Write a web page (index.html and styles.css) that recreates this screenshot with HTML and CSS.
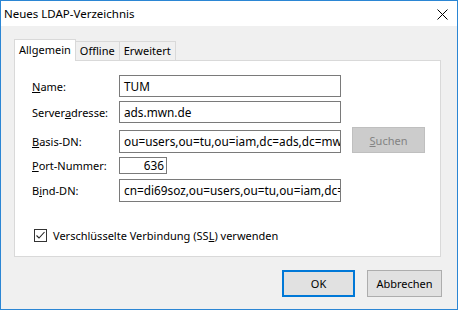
FILE: index.html
```html
<!DOCTYPE html>
<html lang="de">
<head>
  <meta charset="UTF-8" />
  <title>Neues LDAP-Verzeichnis</title>
  <link rel="stylesheet" href="styles.css">
</head>
<body>
  <div class="window">
    <div class="titlebar">
      <span class="title">Neues LDAP-Verzeichnis</span>
      <svg class="close" width="11" height="11" viewBox="0 0 11 11">
        <path d="M0.5 0.5 L10.5 10.5 M10.5 0.5 L0.5 10.5" stroke="#000" stroke-width="1" fill="none" />
      </svg>
    </div>

    <div class="content">
      <div class="tabs">
        <div class="tab active">Allgemein</div>
        <div class="tab">Offline</div>
        <div class="tab">Erweitert</div>
      </div>

      <div class="panel">
        <div class="row">
          <span class="label"><u>N</u>ame:</span>
          <div class="field">TUM</div>
        </div>
        <div class="row">
          <span class="label">Server<u>a</u>dresse:</span>
          <div class="field">ads.mwn.de</div>
        </div>
        <div class="row basis">
          <span class="label"><u>B</u>asis-DN:</span>
          <div class="field tall">ou=users,ou=tu,ou=iam,dc=ads,dc=mwn,dc=de</div>
          <button class="btn disabled"><u>S</u>uchen</button>
        </div>
        <div class="row port">
          <span class="label"><u>P</u>ort-Nummer:</span>
          <div class="field small">636</div>
        </div>
        <div class="row bind">
          <span class="label">B<u>i</u>nd-DN:</span>
          <div class="field tall">cn=di69soz,ou=users,ou=tu,ou=iam,dc=ads,dc=mwn,dc=de</div>
        </div>

        <div class="check">
          <span class="box">
            <svg width="11" height="11" viewBox="0 0 11 11">
              <path d="M1.5 5.5 L4 8 L9.5 2" stroke="#222" stroke-width="1.1" fill="none" />
            </svg>
          </span>
          <span>Verschlüsselte Verbindung (SS<u>L</u>) verwenden</span>
        </div>
      </div>

      <div class="buttons">
        <button class="btn default">OK</button>
        <button class="btn">Abbrechen</button>
      </div>
    </div>
  </div>
</body>
</html>
```

FILE: styles.css
```css
* {
  box-sizing: border-box;
}

body {
  margin: 0;
  font-family: 'Segoe UI', 'Noto Sans', sans-serif;
  font-size: 11px;
  color: #000;
  background: #f0f0f0;
}

.window {
  width: 458px;
  height: 310px;
  border: 1px solid #2b86d4;
  background: #f0f0f0;
  display: flex;
  flex-direction: column;
}

.titlebar {
  height: 25px;
  background: #fff;
  display: flex;
  align-items: center;
  justify-content: space-between;
  padding: 0 9px 0 3px;
  font-size: 11.5px;
}

.close { display: block; margin-top: 1px; }

.content {
  padding: 13px 16px 0 13px;
}

.tabs {
  display: flex;
  align-items: flex-end;
  height: 21px;
}

.tab {
  height: 19px;
  line-height: 17px;
  padding: 0 4px;
  border: 1px solid #d9d9d9;
  border-bottom: none;
  background: #f0f0f0;
  margin-left: -1px;
}

.tab.active {
  margin-left: 0;
  height: 22px;
  line-height: 19px;
  margin-bottom: -1px;
  background: #fff;
  position: relative;
  z-index: 1;
}

.panel {
  width: 427px;
  height: 197px;
  border: 1px solid #d9d9d9;
  background: #fff;
  padding: 14px 0 0 17px;
}

.row {
  display: flex;
  align-items: center;
}

.row + .row { margin-top: 4px; }
.row.basis { margin-top: 7px; }
.row.bind { margin-top: 5px; }

.label {
  width: 87px;
  flex-shrink: 0;
}

.field {
  width: 222px;
  height: 22px;
  line-height: 20px;
  font-size: 11.8px;
  border: 1px solid #7a7a7a;
  padding: 0 0 0 4px;
  white-space: nowrap;
  overflow: hidden;
}

.field.tall { height: 23px; line-height: 21px; }

.field.small {
  width: 48px;
  height: 17px;
  line-height: 15px;
  text-align: right;
  padding: 0 2px 0 0;
}

.btn {
  font: inherit;
  height: 26px;
  padding: 0;
  background: #e1e1e1;
  border: 1px solid #adadad;
  color: #000;
}

.btn.disabled {
  width: 73px;
  margin: -3px 0 0 11px;
  background: #cccccc;
  border-color: #bfbfbf;
  color: #838383;
}

.check {
  display: flex;
  align-items: center;
  margin: 26px 0 0 2px;
}

.check .box {
  width: 13px;
  height: 13px;
  border: 1px solid #333;
  display: flex;
  align-items: center;
  justify-content: center;
  margin-right: 6px;
}

.check svg { display: block; }

.buttons {
  display: flex;
  justify-content: flex-end;
  gap: 12px;
  margin: 13px -1px 0 0;
}

.buttons .btn {
  width: 75px;
  height: 27px;
}

.buttons .btn.default {
  width: 73px;
  border: 2px solid #0078d7;
}
```
